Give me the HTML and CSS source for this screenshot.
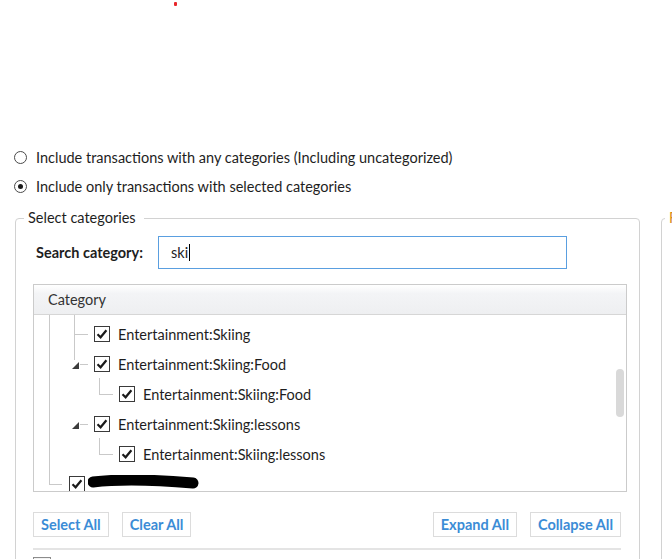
FILE: index.html
```html
<!DOCTYPE html>
<html lang="en">
<head>
    <meta charset="UTF-8">
    <title>Category filter</title>
    <link rel="stylesheet" href="styles.css">
</head>
<body>
<span class="marker"></span>
<div class="page">
    <div class="options">
        <label class="radio"><span class="radio-circle"></span>Include transactions with any categories (Including uncategorized)</label>
        <label class="radio"><span class="radio-circle checked"></span>Include only transactions with selected categories</label>
    </div>

    <div class="groups">
        <fieldset class="group main">
            <legend>Select categories</legend>

            <div class="search-row">
                <label class="search-label">Search category:</label>
                <div class="search-input">ski<span class="caret"></span></div>
            </div>

            <div class="tree">
                <div class="tree-header">Category</div>
                <div class="tree-body">
                    <div class="row l1 first">
                        <span class="check"><svg width="16" height="16" viewBox="0 0 16 16"><rect x="0.5" y="0.5" width="15" height="15" fill="#fff" stroke="#3a3a3a"/><path d="M3.5 8.3 L6.6 11.3 L12.4 4.3" fill="none" stroke="#1a1a1a" stroke-width="2.2"/></svg></span>
                        <span class="name">Entertainment:Skiing</span>
                    </div>
                    <div class="row l1 expanded">
                        <span class="check"><svg width="16" height="16" viewBox="0 0 16 16"><rect x="0.5" y="0.5" width="15" height="15" fill="#fff" stroke="#3a3a3a"/><path d="M3.5 8.3 L6.6 11.3 L12.4 4.3" fill="none" stroke="#1a1a1a" stroke-width="2.2"/></svg></span>
                        <span class="name">Entertainment:Skiing:Food</span>
                    </div>
                    <div class="row l2">
                        <span class="check"><svg width="16" height="16" viewBox="0 0 16 16"><rect x="0.5" y="0.5" width="15" height="15" fill="#fff" stroke="#3a3a3a"/><path d="M3.5 8.3 L6.6 11.3 L12.4 4.3" fill="none" stroke="#1a1a1a" stroke-width="2.2"/></svg></span>
                        <span class="name">Entertainment:Skiing:Food</span>
                    </div>
                    <div class="row l1 expanded">
                        <span class="check"><svg width="16" height="16" viewBox="0 0 16 16"><rect x="0.5" y="0.5" width="15" height="15" fill="#fff" stroke="#3a3a3a"/><path d="M3.5 8.3 L6.6 11.3 L12.4 4.3" fill="none" stroke="#1a1a1a" stroke-width="2.2"/></svg></span>
                        <span class="name">Entertainment:Skiing:lessons</span>
                    </div>
                    <div class="row l2">
                        <span class="check"><svg width="16" height="16" viewBox="0 0 16 16"><rect x="0.5" y="0.5" width="15" height="15" fill="#fff" stroke="#3a3a3a"/><path d="M3.5 8.3 L6.6 11.3 L12.4 4.3" fill="none" stroke="#1a1a1a" stroke-width="2.2"/></svg></span>
                        <span class="name">Entertainment:Skiing:lessons</span>
                    </div>
                    <div class="row l0">
                        <span class="check"><svg width="16" height="16" viewBox="0 0 16 16"><rect x="0.5" y="0.5" width="15" height="15" fill="#fff" stroke="#3a3a3a"/><path d="M3.5 8.3 L6.6 11.3 L12.4 4.3" fill="none" stroke="#1a1a1a" stroke-width="2.2"/></svg></span>
                        <span class="redacted"><svg width="112" height="16" viewBox="0 0 112 16"><path d="M5 7 C30 4 70 5 105 8" fill="none" stroke="#000" stroke-width="11" stroke-linecap="round"/></svg></span>
                    </div>
                    <span class="scroll-thumb"></span>
                </div>
            </div>

            <div class="buttons">
                <div class="btn-group">
                    <button class="btn">Select All</button>
                    <button class="btn">Clear All</button>
                </div>
                <div class="btn-group">
                    <button class="btn">Expand All</button>
                    <button class="btn">Collapse All</button>
                </div>
            </div>

            <div class="separator"></div>
            <span class="bottom-check"></span>
        </fieldset>

        <fieldset class="group side">
            <legend>Filter</legend>
        </fieldset>
    </div>
</div>
</body>
</html>
```

FILE: styles.css
```css
html, body {
    overflow: hidden;
}

body {
    margin: 0;
    width: 672px;
    height: 559px;
    background: #fff;
    color: #1e1e1e;
    font-family: Lato, "Open Sans", sans-serif;
    font-size: 14.5px;
    position: relative;
}

.marker {
    position: absolute;
    left: 174px;
    top: 2px;
    width: 3px;
    height: 4px;
    background: #e8262b;
    border-radius: 1px;
}

.page {
    padding: 146px 0 0 14px;
}

/* radio options */
.options {
    display: flex;
    flex-direction: column;
    gap: 7px;
}

.radio {
    display: flex;
    align-items: center;
    height: 22px;
    gap: 9px;
}

.radio-circle {
    width: 13px;
    height: 13px;
    box-sizing: border-box;
    border: 1px solid #4a4a4a;
    border-radius: 50%;
    background: #fff;
    display: flex;
    align-items: center;
    justify-content: center;
}

.radio-circle.checked::after {
    content: "";
    width: 5px;
    height: 5px;
    border-radius: 50%;
    background: #1a1a1a;
}

/* group boxes */
.groups {
    display: flex;
    margin-top: 12px;
    height: 354px;
    overflow: hidden;
}

.group {
    flex-shrink: 0;
    border: 1px solid #d2d2d2;
    border-radius: 4px;
    margin: 0;
    min-width: 0;
    box-sizing: border-box;
    height: 400px;
}

.group legend {
    padding: 0 8px 0 4px;
    line-height: 18px;
}

.main {
    width: 625px;
    margin-left: 1px;
    padding: 0 0 0 17px;
}

.main legend {
    margin-left: -9px;
}

.side {
    width: 200px;
    margin-left: 21px;
    padding: 0;
}

.side legend {
    margin-left: 3px;
    color: #d88b16;
}

/* search */
.search-row {
    display: flex;
    align-items: center;
    margin-top: 9px;
}

.search-label {
    flex-shrink: 0;
    width: 125px;
    padding-left: 3px;
    box-sizing: border-box;
    font-weight: bold;
    white-space: nowrap;
}

.search-input {
    flex-shrink: 0;
    width: 409px;
    height: 33px;
    box-sizing: border-box;
    border: 1px solid #5a9fe0;
    padding-left: 12px;
    display: flex;
    align-items: center;
}

.caret {
    display: inline-block;
    width: 1px;
    height: 17px;
    background: #000;
    margin-left: 1px;
}

/* tree */
.tree {
    width: 594px;
    height: 208px;
    box-sizing: border-box;
    border: 1px solid #cbcbcb;
    margin-top: 15px;
    display: flex;
    flex-direction: column;
}

.tree-header {
    height: 29px;
    border-bottom: 1px solid #d6d6d6;
    background: linear-gradient(#ffffff, #f3f4f6 30%, #eeeff1);
    padding-left: 14px;
    display: flex;
    align-items: center;
    color: #333;
}

.tree-body {
    flex: 1;
    position: relative;
    overflow: hidden;
    padding-top: 4px;
}

.tree-body::before {
    content: "";
    position: absolute;
    left: 15px;
    top: 0;
    height: 170px;
    border-left: 1px solid #c9c9c9;
}

.row {
    height: 30px;
    display: flex;
    align-items: center;
    gap: 8px;
    position: relative;
}

.row::before,
.row::after {
    content: "";
    position: absolute;
}

.row.l0 { padding-left: 35px; gap: 3px; }
.row.l1 { padding-left: 60px; }
.row.l2 { padding-left: 85px; }

.check {
    width: 16px;
    height: 16px;
    display: flex;
}

.row.l1.first::before {
    left: 40px;
    top: -4px;
    height: 45px;
    border-left: 1px solid #c9c9c9;
}

.row.l1.first::after {
    left: 40px;
    top: 15px;
    width: 14px;
    border-top: 1px solid #c9c9c9;
}

/* expanded expander arrow */
.row.expanded::before {
    left: 38px;
    top: 13px;
    width: 0;
    height: 0;
    border-left: 7px solid transparent;
    border-bottom: 7px solid #3c3c3c;
}

.row.expanded::after {
    left: 46px;
    top: 15px;
    width: 8px;
    border-top: 1px solid #c9c9c9;
}

.row.l2::before {
    left: 65px;
    top: -1px;
    height: 16px;
    border-left: 1px solid #c9c9c9;
}

.row.l2::after {
    left: 65px;
    top: 15px;
    width: 14px;
    border-top: 1px solid #c9c9c9;
}

.row.l0::after {
    left: 15px;
    top: 15px;
    width: 13px;
    border-top: 1px solid #c9c9c9;
}

.redacted {
    display: flex;
    margin-top: -2px;
}

.scroll-thumb {
    position: absolute;
    right: 2px;
    top: 54px;
    width: 8px;
    height: 48px;
    border-radius: 4px;
    background: #d9d9d9;
}

/* buttons */
.buttons {
    width: 588px;
    margin-top: 20px;
    display: flex;
    justify-content: space-between;
}

.btn-group {
    display: flex;
    gap: 13px;
}

.btn {
    height: 25px;
    padding: 0 7px;
    border: 1px solid #dcdcdc;
    background: #fff;
    color: #3b8cd6;
    font-family: inherit;
    font-size: 14.5px;
    font-weight: bold;
}

.separator {
    width: 588px;
    margin-top: 11px;
    border-top: 2px solid #e4e4e4;
}

.bottom-check {
    display: block;
    width: 18px;
    height: 18px;
    box-sizing: border-box;
    margin-top: 7px;
    border: 1px solid #8c8c8c;
    background: #f2f2f2;
}
```
